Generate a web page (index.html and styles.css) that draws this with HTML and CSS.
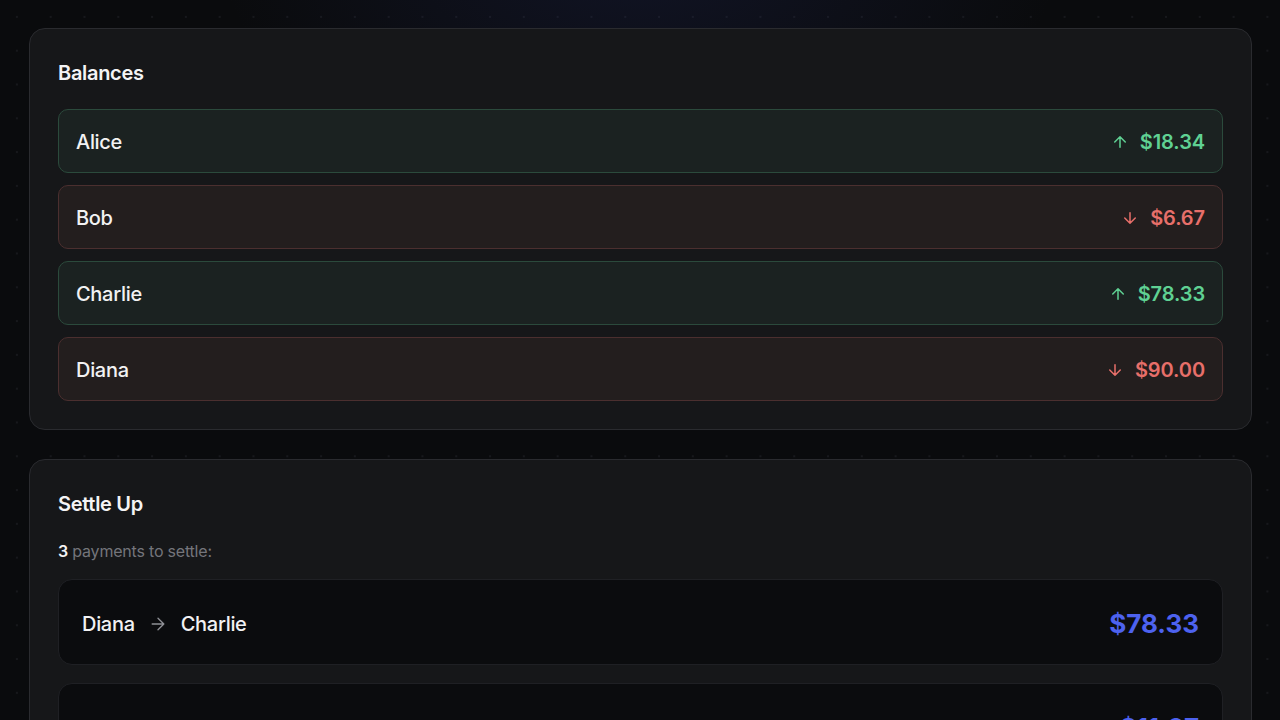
FILE: index.html
```html
<!DOCTYPE html>
<html lang="en">
<head>
<meta charset="utf-8">
<title>Balances</title>
<link rel="stylesheet" href="styles.css">
</head>
<body>
<main class="page">
  <section class="card">
    <h2 class="card-title">Balances</h2>
    <div class="rows">
      <div class="bal-row pos">
        <span class="name">Alice</span>
        <span class="amount"><svg class="arr" viewBox="0 0 24 24"><path d="M12 19V5M5 12l7-7 7 7"/></svg>$18.34</span>
      </div>
      <div class="bal-row neg">
        <span class="name">Bob</span>
        <span class="amount"><svg class="arr" viewBox="0 0 24 24"><path d="M12 5v14M19 12l-7 7-7-7"/></svg>$6.67</span>
      </div>
      <div class="bal-row pos">
        <span class="name">Charlie</span>
        <span class="amount"><svg class="arr" viewBox="0 0 24 24"><path d="M12 19V5M5 12l7-7 7 7"/></svg>$78.33</span>
      </div>
      <div class="bal-row neg">
        <span class="name">Diana</span>
        <span class="amount"><svg class="arr" viewBox="0 0 24 24"><path d="M12 5v14M19 12l-7 7-7-7"/></svg>$90.00</span>
      </div>
    </div>
  </section>

  <section class="card">
    <h2 class="card-title">Settle Up</h2>
    <p class="sub"><strong>3</strong> payments to settle:</p>
    <div class="pays">
      <div class="pay-row">
        <span class="who">Diana<svg class="parr" viewBox="0 0 24 24"><path d="M5 12h14M12 5l7 7-7 7"/></svg>Charlie</span>
        <span class="pay-amt">$78.33</span>
      </div>
      <div class="pay-row">
        <span class="who">Diana<svg class="parr" viewBox="0 0 24 24"><path d="M5 12h14M12 5l7 7-7 7"/></svg>Alice</span>
        <span class="pay-amt">$11.67</span>
      </div>
      <div class="pay-row">
        <span class="who">Bob<svg class="parr" viewBox="0 0 24 24"><path d="M5 12h14M12 5l7 7-7 7"/></svg>Alice</span>
        <span class="pay-amt">$6.67</span>
      </div>
    </div>
  </section>
</main>
</body>
</html>
```

FILE: styles.css
```css
* { box-sizing: border-box; }
html, body { margin: 0; padding: 0; }
body {
  background-color: #0a0b0d;
  background-image:
    radial-gradient(ellipse 420px 220px at 50% -40px, rgba(40, 50, 120, 0.22), rgba(40, 50, 120, 0) 100%),
    radial-gradient(circle, #17181c 1px, transparent 1.5px);
  background-size: 100% 100%, 33.8px 33.8px;
  background-position: 0 0, 0 0;
  background-repeat: no-repeat, repeat;
  font-family: Inter, "Liberation Sans", sans-serif;
  color: #f2f2f3;
  min-height: 100vh;
}
.page {
  padding: 28px 28px 28px 29px;
  display: flex;
  flex-direction: column;
  gap: 29px;
}
.card {
  background: #161719;
  border: 1px solid #2a2b2f;
  border-radius: 16px;
  padding: 29px 28px 28px 28px;
}
.card-title {
  margin: 0 0 21px;
  font-size: 20px;
  line-height: 30px;
  font-weight: 600;
  letter-spacing: -0.3px;
  color: #f4f4f5;
}
.rows {
  display: flex;
  flex-direction: column;
  gap: 12px;
}
.bal-row {
  height: 64px;
  border-radius: 10px;
  border: 1px solid;
  padding: 1px 17px 0;
  display: flex;
  align-items: center;
  justify-content: space-between;
}
.bal-row.pos { background: #1b2221; border-color: #2b4a3c; }
.bal-row.neg { background: #231e1e; border-color: #4b2f2f; }
.name {
  font-size: 20px;
  font-weight: 500;
  letter-spacing: -0.3px;
  color: #f2f2f3;
}
.amount {
  display: flex;
  align-items: center;
  gap: 11px;
  font-size: 20px;
  font-weight: 600;
  letter-spacing: -0.1px;
}
.pos .amount { color: #5fd193; }
.neg .amount { color: #e76f6a; }
.arr {
  width: 18px;
  height: 18px;
  fill: none;
  stroke: currentColor;
  stroke-width: 2;
  stroke-linecap: round;
  stroke-linejoin: round;
}
.sub {
  margin: -1px 0 16px;
  font-size: 16px;
  line-height: 24px;
  color: #74757b;
  letter-spacing: -0.2px;
}
.sub strong { color: #f2f2f3; font-weight: 600; }
.pays {
  display: flex;
  flex-direction: column;
  gap: 18px;
}
.pay-row {
  background: #0b0c0e;
  border: 1px solid #1f2024;
  border-radius: 14px;
  padding: 3px 23px 0;
  height: 86px;
  display: flex;
  align-items: center;
  justify-content: space-between;
}
.who {
  display: flex;
  align-items: center;
  gap: 13px;
  font-size: 20px;
  font-weight: 500;
  letter-spacing: -0.3px;
  color: #f2f2f3;
}
.parr {
  width: 20px;
  height: 20px;
  fill: none;
  stroke: #8f9095;
  stroke-width: 1.6;
  stroke-linecap: round;
  stroke-linejoin: round;
}
.pay-amt {
  font-size: 26px;
  line-height: 36px;
  font-weight: 700;
  color: #4d62ef;
  letter-spacing: 0;
}
```
